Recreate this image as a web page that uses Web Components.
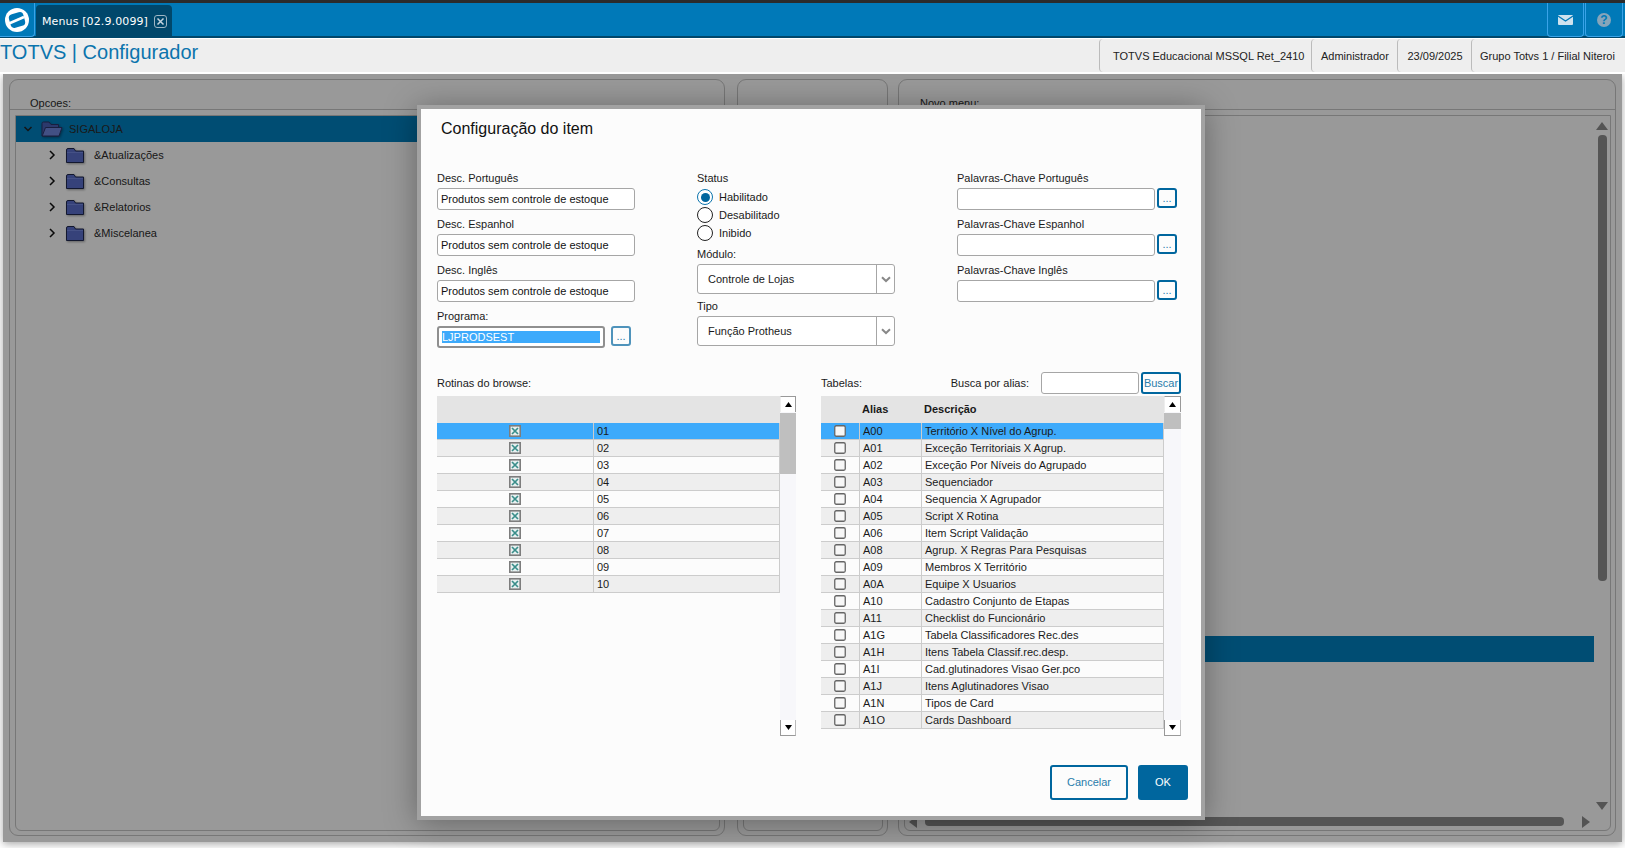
<!DOCTYPE html>
<html lang="pt-BR">
<head>
<meta charset="utf-8">
<title>TOTVS | Configurador</title>
<style>
  html, body { margin: 0; height: 100%; background: #fff; overflow: hidden; }
  body { position: relative; font: 11px "Liberation Sans", Arial, sans-serif; color: #1a1a1a; }
</style>
</head>
<body>
<app-topbar></app-topbar>
<app-subbar></app-subbar>
<app-workspace>
  <work-panel label="Opcoes:" style="width:716px;margin-right:2px">
    <tree-row open selected level="0">SIGALOJA</tree-row>
    <tree-row level="1">&amp;Atualizações</tree-row>
    <tree-row level="1">&amp;Consultas</tree-row>
    <tree-row level="1">&amp;Relatorios</tree-row>
    <tree-row level="1">&amp;Miscelanea</tree-row>
  </work-panel>
  <work-panel style="width:151px"></work-panel>
  <work-panel label="Novo menu:" scroll style="width:718px;--label-x:21px">
    <tree-row selected blank style="margin-top:520px"></tree-row>
  </work-panel>
</app-workspace>
<config-dialog></config-dialog>

<script>
class AppTopbar extends HTMLElement {
  constructor() {
    super();
    this.attachShadow({ mode: 'open' }).innerHTML = `
      <style>
        :host { display: flex; height: 33px; background: #0079b8; border-top: 3px solid #2b2b2b; border-bottom: 2px solid #00476b; }
        .logo { width: 34px; display: flex; align-items: center; justify-content: center; border-right: 1px solid #3aa3e8; border-bottom: 1px solid #3aa3e8; border-bottom-right-radius: 4px; margin-bottom: -1px; }
        .tab { margin: 2px 0 0 1px; width: 136px; display: flex; align-items: center; gap: 6px; box-sizing: border-box; padding: 2px 0 0 6px; background: #00476b; border-radius: 4px 4px 0 0; color: #fff; font: 11px "DejaVu Sans", Verdana, sans-serif; letter-spacing: .12px; }
        .close { width: 11px; height: 11px; border: 1px solid #9fb6c4; border-radius: 3px; display: flex; }
        .spacer { flex: 1; }
        .btn { width: 37px; margin-bottom: -1px; display: flex; align-items: center; justify-content: center; border: 1px solid #3aa3e8; border-top: 0; border-radius: 0 0 4px 4px; box-sizing: border-box; }
        .btn + .btn { width: 38px; margin-right: 2px; margin-left: 1px; }
        .help { width: 14px; height: 14px; border-radius: 50%; background: #86a5ba; color: #0079b8; font: bold 12px/14px "Liberation Sans", Arial, sans-serif; text-align: center; }
      </style>
      <div class="logo">
        <svg width="26" height="26" viewBox="0 0 26 26">
          <circle cx="13" cy="13" r="12" fill="#fff"/>
          <rect x="5.5" y="6" width="15" height="14" rx="4" fill="#0079b8" transform="rotate(-15 13 13)"/>
          <path d="M5 16.5 L20 10" stroke="#fff" stroke-width="2.6" fill="none"/>
        </svg>
      </div>
      <div class="tab">
        <span>Menus [02.9.0099]</span>
        <span class="close"><svg width="11" height="11" viewBox="0 0 11 11"><path d="M2.5 2.5 L8.5 8.5 M8.5 2.5 L2.5 8.5" stroke="#c4d4de" stroke-width="1.5"/></svg></span>
      </div>
      <div class="spacer"></div>
      <div class="btn">
        <svg width="15" height="10" viewBox="0 0 15 10"><rect width="15" height="10" rx="1" fill="#cfe2ee"/><path d="M0 1 L7.5 6 L15 1" fill="none" stroke="#0079b8" stroke-width="1.2"/></svg>
      </div>
      <div class="btn"><div class="help">?</div></div>
    `;
  }
}

class AppSubbar extends HTMLElement {
  constructor() {
    super();
    const items = [
      ['TOTVS Educacional MSSQL Ret_2410', 212, 13],
      ['Administrador', 85.5, 9],
      ['23/09/2025', 74.5, 10],
      ['Grupo Totvs 1 / Filial Niteroi', 154, 8]
    ];
    this.attachShadow({ mode: 'open' }).innerHTML = `
      <style>
        :host { display: flex; height: 33px; margin-top: 1px; background: #eeeeee; align-items: stretch; }
        h1 { flex: 1; margin: 0; font: 20px/26px "Liberation Sans", Arial, sans-serif; color: #0b74ad; }
        .seg { box-sizing: border-box; border-left: 1px solid #bbb; border-radius: 4px 0 0 4px; display: flex; align-items: center; padding-top: 1px; font: 11px "Liberation Sans", Arial, sans-serif; color: #222; white-space: nowrap; }
      </style>
      <h1>TOTVS | Configurador</h1>
      ${items.map(i => `<div class="seg" style="width:${i[1]}px;padding-left:${i[2]}px">${i[0]}</div>`).join('')}
    `;
  }
}

class AppWorkspace extends HTMLElement {
  constructor() {
    super();
    this.attachShadow({ mode: 'open' }).innerHTML = `
      <style>
        :host { display: flex; position: relative; height: 768px; margin: 2px 3px 0; box-sizing: border-box; padding: 5px 6px 6px; gap: 10px; background: #fff; }
        .scrim { position: absolute; inset: 0; background: rgba(0,0,0,.4); box-shadow: 0 2px 8px rgba(0,0,0,.35); clip-path: inset(0 -12px -12px -12px); }
      </style>
      <slot></slot>
      <div class="scrim"></div>
    `;
  }
}

class WorkPanel extends HTMLElement {
  constructor() {
    super();
    const label = this.getAttribute('label') || '';
    const scroll = this.hasAttribute('scroll');
    const up = '<svg width="12" height="8" viewBox="0 0 12 8"><path d="M6 0 L12 8 H0 Z" fill="#8c8c8c"/></svg>';
    const down = '<svg width="12" height="8" viewBox="0 0 12 8"><path d="M6 8 L12 0 H0 Z" fill="#8c8c8c"/></svg>';
    const left = '<svg width="8" height="12" viewBox="0 0 8 12"><path d="M0 6 L8 0 V12 Z" fill="#8c8c8c"/></svg>';
    const right = '<svg width="8" height="12" viewBox="0 0 8 12"><path d="M8 6 L0 0 V12 Z" fill="#8c8c8c"/></svg>';
    this.attachShadow({ mode: 'open' }).innerHTML = `
      <style>
        :host { display: flex; flex-direction: column; flex: none; box-sizing: border-box; border: 1px solid #c6c6c6; border-radius: 9px; }
        .head { height: 30px; flex: none; box-sizing: border-box; border-bottom: 1px solid #c6c6c6; padding-left: var(--label-x, 20px); display: flex; align-items: flex-end; font: 11px/13px "Liberation Sans", Arial, sans-serif; color: #2c2c2c; }
        .head span { margin-bottom: -1px; }
        .frame { flex: 1; margin: 5px 4px 4px 5px; border: 1px solid #c6c6c6; border-radius: 0 0 6px 6px; display: grid; grid-template-columns: 1fr 16px; grid-template-rows: 1fr 16px; min-height: 0; }
        .content { grid-column: 1 / ${scroll ? '2' : '3'}; grid-row: 1 / ${scroll ? '2' : '3'}; overflow: hidden; font: 11px "Liberation Sans", Arial, sans-serif; color: #2c2c2c; }
        .vsb { display: flex; flex-direction: column; align-items: center; padding: 6px 0 4px; }
        .vsb .thumb { width: 9px; height: 446px; margin-top: 5px; background: #8e8e8e; border-radius: 4px; }
        .hsb { display: flex; align-items: center; padding: 3px 4px 4px; }
        .hsb .thumb { height: 9px; width: 639px; margin-left: 8px; background: #8e8e8e; border-radius: 4px; }
        .fill { flex: 1; }
      </style>
      <div class="head"><span>${label}</span></div>
      <div class="frame">
        <div class="content"><slot></slot></div>
        ${scroll ? `<div class="vsb">${up}<div class="thumb"></div><div class="fill"></div>${down}</div>
        <div class="hsb">${left}<div class="thumb"></div><div class="fill"></div>${right}</div>` : ''}
      </div>
    `;
  }
}

class TreeRow extends HTMLElement {
  constructor() {
    super();
    const open = this.hasAttribute('open');
    const selected = this.hasAttribute('selected');
    const blank = this.hasAttribute('blank');
    const level = Number(this.getAttribute('level') || 0);
    const chevron = open
      ? '<svg width="10" height="8" viewBox="0 0 10 8"><path d="M1.5 2 L5 5.5 L8.5 2" fill="none" stroke="#222" stroke-width="1.5"/></svg>'
      : '<svg width="8" height="10" viewBox="0 0 8 10"><path d="M2 1 L6 5 L2 9" fill="none" stroke="#111" stroke-width="1.5"/></svg>';
    const folder = open
      ? `<svg width="22" height="16" viewBox="0 0 22 16"><path d="M1 15 V2.5 Q1 1 2.5 1 H8 L10 3.5 H17.5 V15 Z" fill="#4a60b4" stroke="#2b3469"/><path d="M1.2 15 L4.5 6.5 H21 L18 15 Z" fill="#6f85dc" stroke="#2b3469"/></svg>`
      : `<svg width="18" height="15" viewBox="0 0 18 15"><path d="M.5 14.5 V2 Q.5 .5 2 .5 H8 L9.5 3 H17.5 V14.5 Z" fill="#5a6fcc" stroke="#20284f"/><path d="M1 4.5 H17" stroke="#7488e0"/></svg>`;
    this.attachShadow({ mode: 'open' }).innerHTML = `
      <style>
        :host { display: flex; align-items: center; height: 26px; box-sizing: border-box; white-space: nowrap; background: ${selected ? '#0080c0' : 'transparent'}; }
        .chev { width: 10px; display: flex; justify-content: center; margin-left: ${level ? 31 : 7}px; margin-right: ${level ? 9 : 8}px; }
        .folder { display: flex; filter: drop-shadow(1px 1px 1px rgba(0,0,0,.35)); }
        .text { margin-left: ${level ? 10 : 6}px; }
      </style>
      ${blank ? '' : `<span class="chev">${chevron}</span><span class="folder">${folder}</span><span class="text"><slot></slot></span>`}
    `;
  }
}

class FormField extends HTMLElement {
  constructor() {
    super();
    this.attachShadow({ mode: 'open' }).innerHTML = `
      <style>
        :host { display: block; }
        label { display: block; font: 11px/14px "Liberation Sans", Arial, sans-serif; color: #1a1a1a; margin-bottom: 3px; white-space: nowrap; }
        .row { display: flex; gap: 2px; align-items: flex-start; }
      </style>
      <label>${this.getAttribute('label')}</label>
      <div class="row"><slot></slot></div>
    `;
  }
}

class TextField extends HTMLElement {
  constructor() {
    super();
    const focused = this.hasAttribute('focused');
    this.attachShadow({ mode: 'open' }).innerHTML = `
      <style>
        :host { display: flex; align-items: center; box-sizing: border-box; width: ${this.getAttribute('width') || 198}px; height: 22px; background: #fff; border: ${focused ? '2px solid #8f8f8f' : '1px solid #a6a6a6'}; border-radius: 3px; padding: 0 3px; font: 11px/14px "Liberation Sans", Arial, sans-serif; color: #111; white-space: nowrap; }
        .sel { flex: 1; height: 12px; line-height: 12px; background: #3daafb; color: #fff; }
      </style>
      ${focused ? '<span class="sel"><slot></slot></span>' : '<slot></slot>'}
    `;
  }
}

class AppButton extends HTMLElement {
  constructor() {
    super();
    const primary = this.hasAttribute('primary');
    const soft = this.hasAttribute('soft');
    const w = this.getAttribute('width') || 20;
    const h = Number(this.getAttribute('height') || 20);
    this.attachShadow({ mode: 'open' }).innerHTML = `
      <style>
        :host { display: flex; align-items: center; justify-content: center; box-sizing: border-box; width: ${w}px; height: ${h}px; padding-bottom: ${h > 30 ? 2 : 0}px; border: 2px solid ${soft ? '#4f93bb' : '#00669e'}; border-radius: 3px; background: ${primary ? '#00669e' : '#fcfcfc'}; color: ${primary ? '#fff' : '#2a7cab'}; font: 11px "Liberation Sans", Arial, sans-serif; flex: none; }
      </style>
      <slot></slot>
    `;
  }
}

class RadioOption extends HTMLElement {
  constructor() {
    super();
    const on = this.hasAttribute('checked');
    this.attachShadow({ mode: 'open' }).innerHTML = `
      <style>
        :host { display: flex; align-items: center; gap: 6px; height: 16px; font: 11px "Liberation Sans", Arial, sans-serif; color: #1a1a1a; }
        .dot { box-sizing: border-box; width: 16px; height: 16px; border-radius: 50%; border: 1.5px solid ${on ? '#0b74ad' : '#222'}; background: #fff; display: flex; align-items: center; justify-content: center; }
        .dot i { width: 9px; height: 9px; border-radius: 50%; background: #00669e; display: ${on ? 'block' : 'none'}; }
      </style>
      <span class="dot"><i></i></span><slot></slot>
    `;
  }
}

class ComboBox extends HTMLElement {
  constructor() {
    super();
    this.attachShadow({ mode: 'open' }).innerHTML = `
      <style>
        :host { display: flex; box-sizing: border-box; width: 198px; height: 30px; border: 1px solid #a6a6a6; border-radius: 3px; background: #fff; font: 11px "Liberation Sans", Arial, sans-serif; color: #1a1a1a; }
        .text { flex: 1; display: flex; align-items: center; padding-left: 10px; }
        .arrow { width: 17px; border-left: 1px solid #a6a6a6; display: flex; align-items: center; justify-content: center; }
      </style>
      <div class="text"><slot></slot></div>
      <div class="arrow"><svg width="10" height="7" viewBox="0 0 10 7"><path d="M1 1.2 L5 5 L9 1.2" fill="none" stroke="#888" stroke-width="2"/></svg></div>
    `;
  }
}

class DataGrid extends HTMLElement {
  static get routines() { return ['01','02','03','04','05','06','07','08','09','10']; }
  static get tables() {
    return [
      ['A00','Território X Nível do Agrup.'], ['A01','Exceção Territoriais X Agrup.'],
      ['A02','Exceção Por Níveis do Agrupado'], ['A03','Sequenciador'],
      ['A04','Sequencia X Agrupador'], ['A05','Script X Rotina'],
      ['A06','Item Script Validação'], ['A08','Agrup. X Regras Para Pesquisas'],
      ['A09','Membros X Território'], ['A0A','Equipe X Usuarios'],
      ['A10','Cadastro Conjunto de Etapas'], ['A11','Checklist do Funcionário'],
      ['A1G','Tabela Classificadores Rec.des'], ['A1H','Itens Tabela Classif.rec.desp.'],
      ['A1I','Cad.glutinadores Visao Ger.pco'], ['A1J','Itens Aglutinadores Visao'],
      ['A1N','Tipos de Card'], ['A1O','Cards Dashboard']
    ];
  }

  constructor() {
    super();
    const isTables = this.getAttribute('kind') === 'tables';
    const checked = `<svg width="12" height="12" viewBox="0 0 12 12"><rect x=".8" y=".8" width="10.4" height="10.4" fill="#e8f0f0" stroke="#7d7d7d" stroke-width="1.6"/><path d="M3 3 L9 9 M9 3 L3 9" stroke="#3a8e8a" stroke-width="1.7"/></svg>`;
    const empty = `<svg width="12" height="12" viewBox="0 0 12 12"><rect x=".75" y=".75" width="10.5" height="10.5" rx="1.5" fill="#f7f7f7" stroke="#666" stroke-width="1.3"/></svg>`;
    const rows = isTables
      ? DataGrid.tables.map((r, i) => `<div class="row ${i === 0 ? 'sel' : ''}"><span class="c">${empty}</span><span class="a">${r[0]}</span><span class="a">${r[1]}</span></div>`)
      : DataGrid.routines.map((r, i) => `<div class="row ${i === 0 ? 'sel' : ''}"><span class="c">${checked}</span><span class="a">${r}</span></div>`);
    const cols = isTables ? '38px 62px 1fr' : '156px 1fr';
    this.attachShadow({ mode: 'open' }).innerHTML = `
      <style>
        :host { display: flex; height: 340px; font: 11px "Liberation Sans", Arial, sans-serif; color: #1a1a1a; }
        .table { width: 343px; flex: none; }
        .head { height: 27px; box-sizing: border-box; padding-bottom: 2px; background: #e4e4e4; display: grid; grid-template-columns: ${cols}; align-items: center; font-weight: bold; }
        .head span { padding-left: 3px; }
        .row { display: grid; grid-template-columns: ${cols}; height: 17px; box-sizing: border-box; border-bottom: 1px solid #ccc; border-right: 1px solid #ccc; background: #fcfcfc; align-items: stretch; line-height: 16px; }
        .row:nth-child(even) { background: #eee; }
        .row.sel { background: #3daafb; }
        .row .c { display: flex; align-items: center; justify-content: center; }
        .row .a { border-left: 1px solid #ccc; padding-left: 3px; white-space: nowrap; overflow: hidden; }
        .sb { width: ${isTables ? 17 : 16}px; display: flex; flex-direction: column; background: #f7f7fa; }
        .btn { height: 16px; box-sizing: border-box; background: #fff; display: flex; align-items: center; justify-content: center; }
        .btn.up { border-top: 1px solid #999; border-right: 1px solid #999; border-left: 1px solid #eee; }
        .btn.dn { border-bottom: 1px solid #999; border-right: 1px solid #bbb; border-left: 1px solid #999; }
        .thumb { height: ${isTables ? 16 : 61}px; margin-top: 1px; background: #bfbfbf; }
        .fill { flex: 1; }
      </style>
      <div class="table">
        <div class="head">${isTables ? '<span></span><span>Alias</span><span>Descrição</span>' : ''}</div>
        <div>${rows.join('')}</div>
      </div>
      <div class="sb">
        <div class="btn up"><svg width="7" height="5" viewBox="0 0 7 5"><path d="M3.5 0 L7 5 H0 Z" fill="#000"/></svg></div>
        <div class="thumb"></div>
        <div class="fill"></div>
        <div class="btn dn"><svg width="7" height="5" viewBox="0 0 7 5"><path d="M3.5 5 L7 0 H0 Z" fill="#000"/></svg></div>
      </div>
    `;
  }
}

class ConfigDialog extends HTMLElement {
  constructor() {
    super();
    const desc = 'Produtos sem controle de estoque';
    this.attachShadow({ mode: 'open' }).innerHTML = `
      <style>
        :host { position: absolute; left: 417px; top: 105px; width: 788px; height: 715px; box-sizing: border-box; border: 4px solid #a2a2a2; background: #fcfcfc; box-shadow: 0 3px 30px rgba(0,0,0,.34); padding: 10px 13px 0 16px; font: 11px "Liberation Sans", Arial, sans-serif; color: #1a1a1a; }
        h2 { margin: 0 0 32px 4px; font: 16px/20px "Liberation Sans", Arial, sans-serif; color: #111; }
        .form { display: grid; grid-template-columns: 260px 260px 1fr; height: 177px; margin-bottom: 24px; }
        .col { display: flex; flex-direction: column; gap: 7px; }
        .radios { display: flex; flex-direction: column; gap: 2px; margin-top: 1px; margin-bottom: 1px; }
        .tight { gap: 5px; }
        .lists { display: grid; grid-template-columns: 359px 360px; column-gap: 25px; }
        .list-head { display: flex; align-items: center; height: 22px; margin-bottom: 2px; }
        .list-head .txt { margin-bottom: 1px; }
        .search { margin-left: auto; display: flex; align-items: center; gap: 2px; }
        .search .txt { margin-right: 10px; }
        .foot { display: flex; justify-content: flex-end; gap: 10px; margin-top: 29px; }
      </style>
      <h2>Configuração do item</h2>
      <div class="form">
        <div class="col">
          <form-field label="Desc. Português"><text-field>${desc}</text-field></form-field>
          <form-field label="Desc. Espanhol"><text-field>${desc}</text-field></form-field>
          <form-field label="Desc. Inglês"><text-field>${desc}</text-field></form-field>
          <form-field label="Programa:"><text-field focused width="168">LJPRODSEST</text-field><app-button soft style="margin-left:4px">...</app-button></form-field>
        </div>
        <div class="col tight">
          <form-field label="Status">
            <div class="radios">
              <radio-option checked>Habilitado</radio-option>
              <radio-option>Desabilitado</radio-option>
              <radio-option>Inibido</radio-option>
            </div>
          </form-field>
          <form-field label="Módulo:"><combo-box>Controle de Lojas</combo-box></form-field>
          <form-field label="Tipo"><combo-box>Função Protheus</combo-box></form-field>
        </div>
        <div class="col">
          <form-field label="Palavras-Chave Português"><text-field></text-field><app-button>...</app-button></form-field>
          <form-field label="Palavras-Chave Espanhol"><text-field></text-field><app-button>...</app-button></form-field>
          <form-field label="Palavras-Chave Inglês"><text-field></text-field><app-button>...</app-button></form-field>
        </div>
      </div>
      <div class="lists">
        <div>
          <div class="list-head"><span class="txt">Rotinas do browse:</span></div>
          <data-grid kind="routines"></data-grid>
        </div>
        <div>
          <div class="list-head"><span class="txt">Tabelas:</span>
            <div class="search"><span class="txt">Busca por alias:</span><text-field width="98"></text-field><app-button width="40" height="22">Buscar</app-button></div>
          </div>
          <data-grid kind="tables"></data-grid>
        </div>
      </div>
      <div class="foot">
        <app-button width="78" height="35">Cancelar</app-button>
        <app-button primary width="50" height="35">OK</app-button>
      </div>
    `;
  }
}

customElements.define('form-field', FormField);
customElements.define('text-field', TextField);
customElements.define('app-button', AppButton);
customElements.define('radio-option', RadioOption);
customElements.define('combo-box', ComboBox);
customElements.define('data-grid', DataGrid);
customElements.define('tree-row', TreeRow);
customElements.define('work-panel', WorkPanel);
customElements.define('app-topbar', AppTopbar);
customElements.define('app-subbar', AppSubbar);
customElements.define('app-workspace', AppWorkspace);
customElements.define('config-dialog', ConfigDialog);
</script>
</body>
</html>
